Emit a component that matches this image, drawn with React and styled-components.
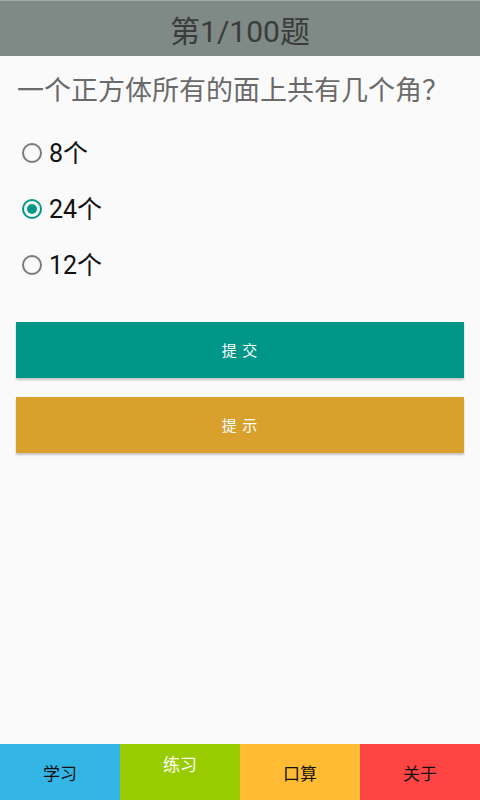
import React, { useState } from "react";
import styled, { createGlobalStyle } from "styled-components";

const Global = createGlobalStyle`
  html, body { margin: 0; padding: 0; background: #fafafa; }
  body { font-family: Roboto, "Noto Sans CJK SC", sans-serif; }
  * { box-sizing: border-box; }
`;

const Page = styled.div`
  height: 800px;
  display: flex;
  flex-direction: column;
  background: #fafafa;
`;

const Header = styled.header`
  height: 56px;
  flex: none;
  background: #7f8985;
  border-top: 1px solid #a3aaa8;
  display: flex;
  align-items: center;
  justify-content: center;
`;

const Title = styled.h1`
  margin: 0;
  font-size: 30px;
  font-weight: 400;
  color: #3a3c3b;
  font-family: Roboto, "Noto Sans CJK SC", sans-serif;
`;

const Main = styled.main`
  flex: 1;
  display: flex;
  flex-direction: column;
`;

const Question = styled.p`
  margin: 0;
  padding: 17px 0 0 17px;
  font-size: 27px;
  line-height: 36px;
  color: #6a6a6a;
  white-space: nowrap;
`;

const Options = styled.div`
  margin-top: 16px;
  display: flex;
  flex-direction: column;
`;

const Option = styled.label`
  height: 56px;
  display: flex;
  align-items: center;
  padding-left: 22px;
  gap: 7px;
  cursor: pointer;
`;

const Circle = styled.span`
  width: 20px;
  height: 20px;
  border-radius: 50%;
  border: 2px solid ${(p) => (p.$checked ? "#009688" : "#7a7a7a")};
  display: flex;
  align-items: center;
  justify-content: center;
  &::after {
    content: "";
    width: 10px;
    height: 10px;
    border-radius: 50%;
    background: ${(p) => (p.$checked ? "#009688" : "transparent")};
  }
`;

const OptionText = styled.span`
  font-size: 25px;
  color: #111;
  line-height: 1;
`;

const Buttons = styled.div`
  margin: 29px 16px 0;
  display: flex;
  flex-direction: column;
  gap: 19px;
`;

const Button = styled.button`
  height: 56px;
  border: none;
  border-radius: 0;
  background: ${(p) => p.$bg};
  color: #fff;
  font-family: Roboto, "Noto Sans CJK SC", sans-serif;
  font-size: 15px;
  letter-spacing: 1px;
  padding-bottom: 2px;
  box-shadow: 0 2px 2px rgba(0, 0, 0, 0.22);
`;

const Nav = styled.nav`
  height: 56px;
  flex: none;
  display: flex;
`;

const NavItem = styled.div`
  flex: 1;
  background: ${(p) => p.$bg};
  color: ${(p) => (p.$active ? "#fff" : "#111")};
  font-size: 17px;
  display: flex;
  justify-content: center;
  align-items: ${(p) => (p.$active ? "flex-start" : "center")};
  padding-top: ${(p) => (p.$active ? "7px" : "0")};
`;

const options = ["8个", "24个", "12个"];
const tabs = [
  { label: "学习", bg: "#33b5e5" },
  { label: "练习", bg: "#99cc00", active: true },
  { label: "口算", bg: "#ffbb33" },
  { label: "关于", bg: "#ff4444" },
];

export default function App() {
  const [sel, setSel] = useState(1);
  return (
    <Page>
      <Global />
      <Header>
        <Title>第1/100题</Title>
      </Header>
      <Main>
        <Question>一个正方体所有的面上共有几个角？</Question>
        <Options>
          {options.map((o, i) => (
            <Option key={o} onClick={() => setSel(i)}>
              <Circle $checked={sel === i} />
              <OptionText>{o}</OptionText>
            </Option>
          ))}
        </Options>
        <Buttons>
          <Button $bg="#009688">提 交</Button>
          <Button $bg="#d9a02c">提 示</Button>
        </Buttons>
      </Main>
      <Nav>
        {tabs.map((t) => (
          <NavItem key={t.label} $bg={t.bg} $active={t.active}>
            {t.label}
          </NavItem>
        ))}
      </Nav>
    </Page>
  );
}
